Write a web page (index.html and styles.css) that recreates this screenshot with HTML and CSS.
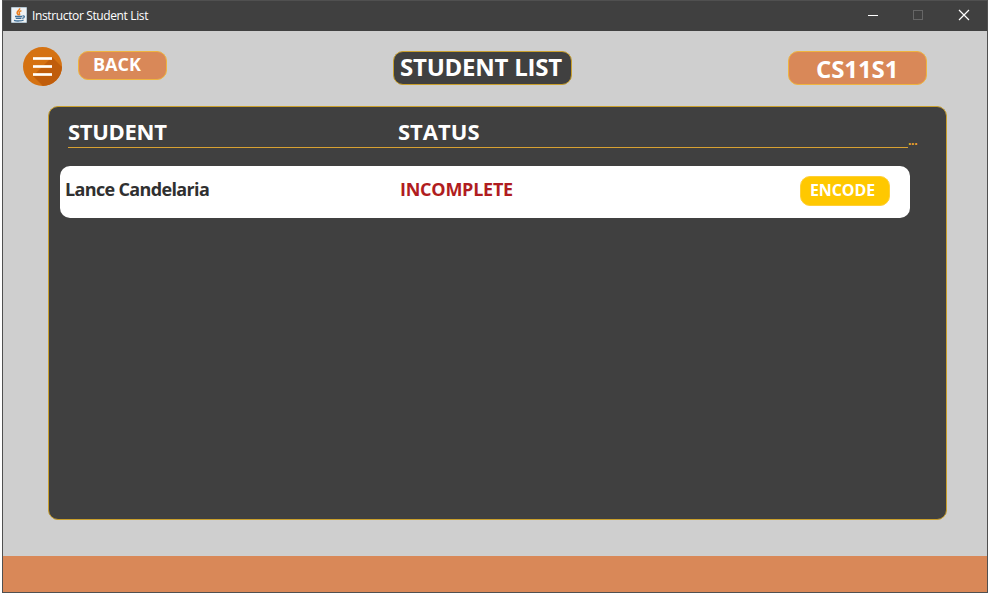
FILE: index.html
```html
<!DOCTYPE html>
<html lang="en">
<head>
<meta charset="utf-8">
<title>Instructor Student List</title>
<link rel="stylesheet" href="styles.css">
</head>
<body>
<div class="window">
  <header class="titlebar">
    <svg class="app-icon" width="16" height="16" viewBox="0 0 16 16">
      <rect width="16" height="16" rx="1" fill="#b4c6d2"/>
      <rect x="1" y="1" width="14" height="14" fill="#eef1f3"/>
      <path d="M8.600 1.200C9.400 3 5.600 4.200 6.100 6c.2 1 1.200 1.600 1.600 2.400M10.400 3.600C8.600 4.400 7.600 5.300 8.400 6.400c.5.7.2 1.300-.3 1.800" fill="none" stroke="#ea7d1c" stroke-width="1.500"/>
      <path d="M4 9.500h7.200M4.800 11.300h5.600M3 13.300c2.400 1 7.400.9 9.600-.3M11.600 8.900c2.400-.5 2.400 2-.4 2.500" fill="none" stroke="#3f7099" stroke-width="1.300"/>
    </svg>
    <span class="caption">Instructor Student List</span>
    <svg class="controls" width="103" height="12" viewBox="0 0 103 12">
      <path d="M0 6.500h10" stroke="#fff"/>
      <rect x="45.500" y="1.500" width="9" height="9" fill="none" stroke="#666"/>
      <path d="M91 1l10 10M101 1L91 11" stroke="#fff" stroke-width="1.200"/>
    </svg>
  </header>
  <main class="content">
    <nav class="toolbar">
      <svg class="menu" width="39" height="39" viewBox="0 0 39 39">
        <defs><clipPath id="disc"><circle cx="19.500" cy="19.500" r="19.500"/></clipPath></defs>
        <g clip-path="url(#disc)">
          <rect width="39" height="39" fill="#d57212"/>
          <path d="M29 10L39 20V39H20L10 29Z" fill="#c05d0b"/>
        </g>
        <path d="M10 11.500h19M10 19.500h19M10 27.500h19" stroke="#f3cfa6" stroke-width="3"/>
        <path d="M10 11.500h19M10 19.500h19M10 27.500h19" stroke="#fff" stroke-width="2"/>
      </svg>
      <button class="pill back"><span>BACK</span></button>
      <h1 class="pill title"><span>STUDENT LIST</span></h1>
      <div class="pill section"><span>CS11S1</span></div>
    </nav>
    <section class="panel">
      <div class="columns">
        <div class="heads"><span class="head-student">STUDENT</span><span class="head-status">STATUS</span></div>
        <span class="more">...</span>
      </div>
      <div class="row">
        <span class="name">Lance Candelaria</span>
        <span class="status">INCOMPLETE</span>
        <button class="encode"><span>ENCODE</span></button>
      </div>
    </section>
  </main>
  <footer class="footer"></footer>
</div>
</body>
</html>
```
FILE: styles.css
```css
* { box-sizing: border-box; }
body {
  margin: 0;
  background: #fff;
  font-family: "Open Sans", "Noto Sans", sans-serif;
  white-space: nowrap;
}
button { padding: 0; font-family: inherit; }
.window {
  display: flex;
  flex-direction: column;
  height: 593px;
  margin-left: 2px;
  border: 1px solid #505050;
  background: #cfcfcf;
}
.titlebar {
  display: flex;
  align-items: center;
  height: 30px;
  padding: 0 16px 2px 8px;
  background: #404040;
  color: #fff;
}
.caption {
  margin-left: 5px;
  font-size: 12px;
  letter-spacing: -0.37px;
}
.controls { margin-left: auto; }
.content { flex: 1; }
.toolbar {
  display: flex;
  align-items: flex-start;
  height: 75px;
  padding: 20px 0 0 20px;
}
.menu { margin-top: -4px; }
.pill {
  display: flex;
  align-items: flex-start;
  margin: 0;
  border: 1px solid #efb43f;
  border-radius: 10px;
  background: #d98858;
  color: #fff;
  font-weight: 700;
}
.back {
  width: 89px;
  height: 29px;
  margin-left: 16px;
  padding-left: 14px;
  font-size: 18px;
  line-height: 25px;
}
.title {
  width: 179px;
  height: 34px;
  margin-left: 226px;
  padding-left: 6px;
  border-color: #c99f2c;
  background: #404040;
  font-size: 24px;
  letter-spacing: -0.23px;
  line-height: 30px;
}
.section {
  width: 139px;
  height: 34px;
  margin-left: 216px;
  padding-left: 27px;
  font-size: 24px;
  letter-spacing: -0.1px;
  line-height: 34px;
}
.panel {
  width: 899px;
  height: 414px;
  margin-left: 45px;
  padding: 0 0 0 11px;
  border: 1px solid #c99f2c;
  border-radius: 10px;
  background: #404040;
}
.columns {
  display: flex;
  align-items: flex-end;
  height: 41px;
  padding-left: 8px;
}
.heads {
  display: grid;
  grid-template-columns: 330px 1fr;
  width: 840px;
  height: 32px;
  border-bottom: 1px solid #d8a132;
  color: #fff;
  font-size: 22px;
  font-weight: 700;
  line-height: 30px;
}
.head-student { letter-spacing: -0.3px; }
.more {
  color: #f0a828;
  font-size: 12px;
  font-weight: 700;
  letter-spacing: -0.3px;
  line-height: 14px;
  height: 16px;
  margin-bottom: -2px;
}
.row {
  display: grid;
  grid-template-columns: 335px 400px 90px;
  width: 850px;
  height: 52px;
  margin-top: 18px;
  padding: 10px 0 0 5px;
  border-radius: 10px;
  background: #fff;
  font-size: 18px;
  font-weight: 700;
  line-height: 26px;
}
.name { color: #303030; letter-spacing: -0.65px; }
.status { color: #b01c20; letter-spacing: -0.25px; }
.encode {
  display: flex;
  width: 89.5px;
  height: 29.5px;
  padding-left: 9px;
  border: 1px solid #ffcf35;
  border-radius: 10px;
  background: #ffc800;
  color: #fff;
  font-size: 16px;
  font-weight: 700;
  letter-spacing: -0.1px;
  line-height: 26px;
}
.footer { height: 36px; background: #d98858; }
```
